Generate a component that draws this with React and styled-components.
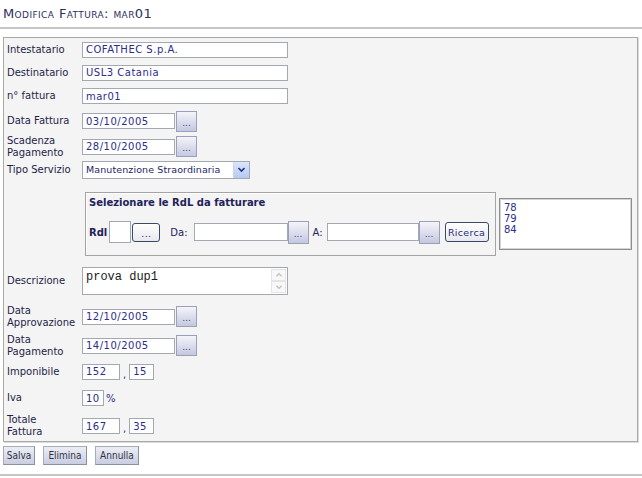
import React from "react";
import styled, { createGlobalStyle } from "styled-components";

const Global = createGlobalStyle`
  html, body { margin: 0; padding: 0; background: #ffffff; }
  body { font-family: "DejaVu Sans", Verdana, sans-serif; font-size: 10px; color: #1c1c4a; }
  * { box-sizing: border-box; }
`;

const Page = styled.div`
  width: 642px;
  height: 478px;
  display: flex;
  flex-direction: column;
  overflow: hidden;
`;

const Title = styled.div`
  height: 27px;
  line-height: 27px;
  padding-left: 3px;
  font-size: 13px;
  font-variant: small-caps;
  color: #2e2e5e;
  letter-spacing: 0.4px;
`;

const Rule = styled.div`
  height: 2px;
  background: #c6c6c6;
  margin-top: ${(p) => p.$mt || 0}px;
`;

const Panel = styled.div`
  margin: 8px 4px 0 3px;
  background: #f4f4f4;
  border: 1px solid #a9a9a9;
  box-shadow: 1px 1px 0 #dcdcdc;
  padding-left: 3px;
  display: flex;
  flex-direction: column;
`;

const Row = styled.div`
  height: ${(p) => p.$h}px;
  display: grid;
  grid-template-columns: 75px 1fr;
  align-items: ${(p) => p.$align || "center"};
`;

const Label = styled.div`
  font-size: 10px;
  line-height: 12px;
  color: #1e1e48;
  white-space: nowrap;
`;

const Controls = styled.div`
  display: flex;
  align-items: ${(p) => p.$align || "center"};
`;

const Field = styled.input`
  width: ${(p) => p.$w}px;
  height: ${(p) => p.$h || 16}px;
  border: 1px solid #a2a9b3;
  background: #ffffff;
  padding: 0 3px;
  margin: 0 0 0 ${(p) => p.$ml || 0}px;
  font-family: "DejaVu Sans", Verdana, sans-serif;
  font-size: 10px;
  letter-spacing: 0.5px;
  color: #2c2c8a;
  outline: none;
`;

const CalButton = styled.div`
  width: 21px;
  height: ${(p) => p.$h || 21}px;
  margin-left: ${(p) => (p.$ml === undefined ? 1 : p.$ml)}px;
  border: 1px solid #9aa0bc;
  background: linear-gradient(#f4f4fa, #c4c8de);
  display: flex;
  align-items: center;
  justify-content: center;
  padding-top: 3px;
  font-size: 9px;
  color: #3a3a8a;
`;

const Sep = styled.span`
  font-size: 10px;
  color: #2c2c8a;
  margin: 0 ${(p) => p.$mr || 3}px 0 ${(p) => p.$ml || 3}px;
  align-self: ${(p) => p.$self || "center"};
`;

const Select = styled.div`
  width: 168px;
  height: 18px;
  border: 1px solid #a2a9b3;
  background: #fff;
  display: flex;
  align-items: center;
  justify-content: space-between;
  padding-left: 3px;
  font-size: 9.5px;
  letter-spacing: 0.1px;
  color: #1e1e6a;
  white-space: nowrap;
  overflow: hidden;
`;

const SelectArrow = styled.div`
  width: 16px;
  height: 16px;
  flex: none;
  background: linear-gradient(#dbe6fb, #b5c9f0);
  border-left: 1px solid #c9d6f0;
  display: flex;
  align-items: center;
  justify-content: center;
`;

const RdlBox = styled.div`
  margin: 12px 0 0 3px;
  width: 411px;
  height: 64px;
  border: 1px solid #a4a4a4;
  box-shadow: inset 1px 1px 0 #ffffff;
  padding: 4px 3px 0 3px;
  display: flex;
  flex-direction: column;
`;

const BoxTitle = styled.div`
  font-weight: bold;
  font-size: 10px;
  line-height: 12px;
  color: #22225a;
`;

const InlineRow = styled.div`
  margin-top: 11px;
  height: 24px;
  display: flex;
  align-items: center;
`;

const InlineText = styled.span`
  font-size: 10px;
  font-weight: ${(p) => (p.$bold ? "bold" : "normal")};
  color: #22225a;
  margin-left: ${(p) => p.$ml || 0}px;
  margin-right: ${(p) => p.$mr || 0}px;
`;

const RoundButton = styled.div`
  width: ${(p) => p.$w}px;
  height: ${(p) => p.$h}px;
  margin-left: ${(p) => p.$ml || 0}px;
  border: 1px solid #3c4a66;
  border-radius: 3px;
  background: linear-gradient(#ffffff, #e6e8ee);
  display: flex;
  align-items: center;
  justify-content: center;
  font-size: 9.5px;
  letter-spacing: 0.3px;
  color: #2a2a7a;
  padding-top: ${(p) => p.$pt || 0}px;
`;

const ListBox = styled.div`
  margin: 18px 0 0 3px;
  width: 133px;
  height: 52px;
  border: 1px solid #8e8e8e;
  box-shadow: inset 0 0 0 1px #d4d4d4;
  background: #fff;
  padding: 3px 0 0 4px;
  font-size: 10px;
  line-height: 11px;
  color: #2c2c8a;
`;

const TextArea = styled.div`
  width: 206px;
  height: 28px;
  border: 1px solid #a2a9b3;
  background: #fff;
  display: flex;
  justify-content: space-between;
`;

const AreaText = styled.div`
  padding: 3px 0 0 3px;
  font-family: "Liberation Mono", "Courier New", monospace;
  font-size: 12px;
  line-height: 13px;
  color: #1a1a1a;
`;

const ScrollBar = styled.div`
  width: 16px;
  display: flex;
  flex-direction: column;
  justify-content: space-between;
  padding: 1px 1px 1px 0;
`;

const ScrollArrow = styled.div`
  height: 12px;
  border: 1px solid #e4e4e4;
  background: #f8f8f8;
  display: flex;
  align-items: center;
  justify-content: center;
`;

const ButtonBar = styled.div`
  display: flex;
  gap: 8px;
  margin: 4px 0 0 3px;
`;

const ActionButton = styled.div`
  width: ${(p) => p.$w}px;
  height: 19px;
  border: 1px solid #a7acbd;
  border-right-color: #8a90a6;
  border-bottom-color: #8a90a6;
  background: linear-gradient(#eceef6, #c9cde0);
  display: flex;
  align-items: center;
  justify-content: center;
  font-family: "DejaVu Sans Condensed", "DejaVu Sans", sans-serif;
  font-stretch: condensed;
  font-size: 10px;
  color: #333344;
`;

const Chevron = ({ up, color = "#1e2f8a", size = 9 }) => (
  <svg width={size} height={size} viewBox="0 0 9 9">
    <path
      d={up ? "M1.5 6 L4.5 3 L7.5 6" : "M1.5 3 L4.5 6 L7.5 3"}
      fill="none"
      stroke={color}
      strokeWidth="1.6"
    />
  </svg>
);

const DateField = ({ value }) => (
  <Controls>
    <Field $w={93} value={value} readOnly />
    <CalButton>...</CalButton>
  </Controls>
);

export default function App() {
  return (
    <Page>
      <Global />
      <Title>Modifica Fattura: mar01</Title>
      <Rule />
      <Panel>
        <Row $h={23}>
          <Label>Intestatario</Label>
          <Controls>
            <Field $w={206} value="COFATHEC S.p.A." readOnly />
          </Controls>
        </Row>
        <Row $h={23}>
          <Label>Destinatario</Label>
          <Controls>
            <Field $w={206} value="USL3 Catania" readOnly />
          </Controls>
        </Row>
        <Row $h={24}>
          <Label>n° fattura</Label>
          <Controls>
            <Field $w={206} value="mar01" readOnly />
          </Controls>
        </Row>
        <Row $h={26}>
          <Label>Data Fattura</Label>
          <DateField value="03/10/2005" />
        </Row>
        <Row $h={25}>
          <Label>
            Scadenza
            <br />
            Pagamento
          </Label>
          <DateField value="28/10/2005" />
        </Row>
        <Row $h={21}>
          <Label>Tipo Servizio</Label>
          <Controls>
            <Select>
              <span>Manutenzione Straordinaria</span>
              <SelectArrow>
                <Chevron />
              </SelectArrow>
            </Select>
          </Controls>
        </Row>
        <Row $h={82} $align="start">
          <Label />
          <Controls $align="flex-start">
            <RdlBox>
              <BoxTitle>Selezionare le RdL da fatturare</BoxTitle>
              <InlineRow>
                <InlineText $bold $mr={2}>Rdl</InlineText>
                <Field $w={22} $h={22} value="" readOnly />
                <RoundButton $w={28} $h={19} $ml={1} $pt={2}>...</RoundButton>
                <InlineText $ml={10} $mr={6}>Da:</InlineText>
                <Field $w={94} $h={18} value="" readOnly />
                <CalButton $ml={0} $h={23}>...</CalButton>
                <InlineText $ml={4} $mr={4}>A:</InlineText>
                <Field $w={92} $h={18} value="" readOnly />
                <CalButton $ml={0} $h={23}>...</CalButton>
                <RoundButton $w={44} $h={20} $ml={5}>Ricerca</RoundButton>
              </InlineRow>
            </RdlBox>
            <ListBox>
              <div>78</div>
              <div>79</div>
              <div>84</div>
            </ListBox>
          </Controls>
        </Row>
        <Row $h={38}>
          <Label>Descrizione</Label>
          <Controls>
            <TextArea>
              <AreaText>prova dup1</AreaText>
              <ScrollBar>
                <ScrollArrow>
                  <Chevron up color="#c4c4c4" size={8} />
                </ScrollArrow>
                <ScrollArrow>
                  <Chevron color="#c4c4c4" size={8} />
                </ScrollArrow>
              </ScrollBar>
            </TextArea>
          </Controls>
        </Row>
        <Row $h={33}>
          <Label>
            Data
            <br />
            Approvazione
          </Label>
          <DateField value="12/10/2005" />
        </Row>
        <Row $h={25}>
          <Label>
            Data
            <br />
            Pagamento
          </Label>
          <DateField value="14/10/2005" />
        </Row>
        <Row $h={27}>
          <Label>Imponibile</Label>
          <Controls>
            <Field $w={38} value="152" readOnly />
            <Sep $self="flex-end">,</Sep>
            <Field $w={25} value="15" readOnly />
          </Controls>
        </Row>
        <Row $h={26}>
          <Label>Iva</Label>
          <Controls>
            <Field $w={22} value="10" readOnly />
            <Sep $ml={2}>%</Sep>
          </Controls>
        </Row>
        <Row $h={30}>
          <Label>
            Totale
            <br />
            Fattura
          </Label>
          <Controls>
            <Field $w={38} value="167" readOnly />
            <Sep $self="flex-end">,</Sep>
            <Field $w={25} value="35" readOnly />
          </Controls>
        </Row>
      </Panel>
      <ButtonBar>
        <ActionButton $w={32}>Salva</ActionButton>
        <ActionButton $w={44}>Elimina</ActionButton>
        <ActionButton $w={44}>Annulla</ActionButton>
      </ButtonBar>
      <Rule $mt={9} />
    </Page>
  );
}
